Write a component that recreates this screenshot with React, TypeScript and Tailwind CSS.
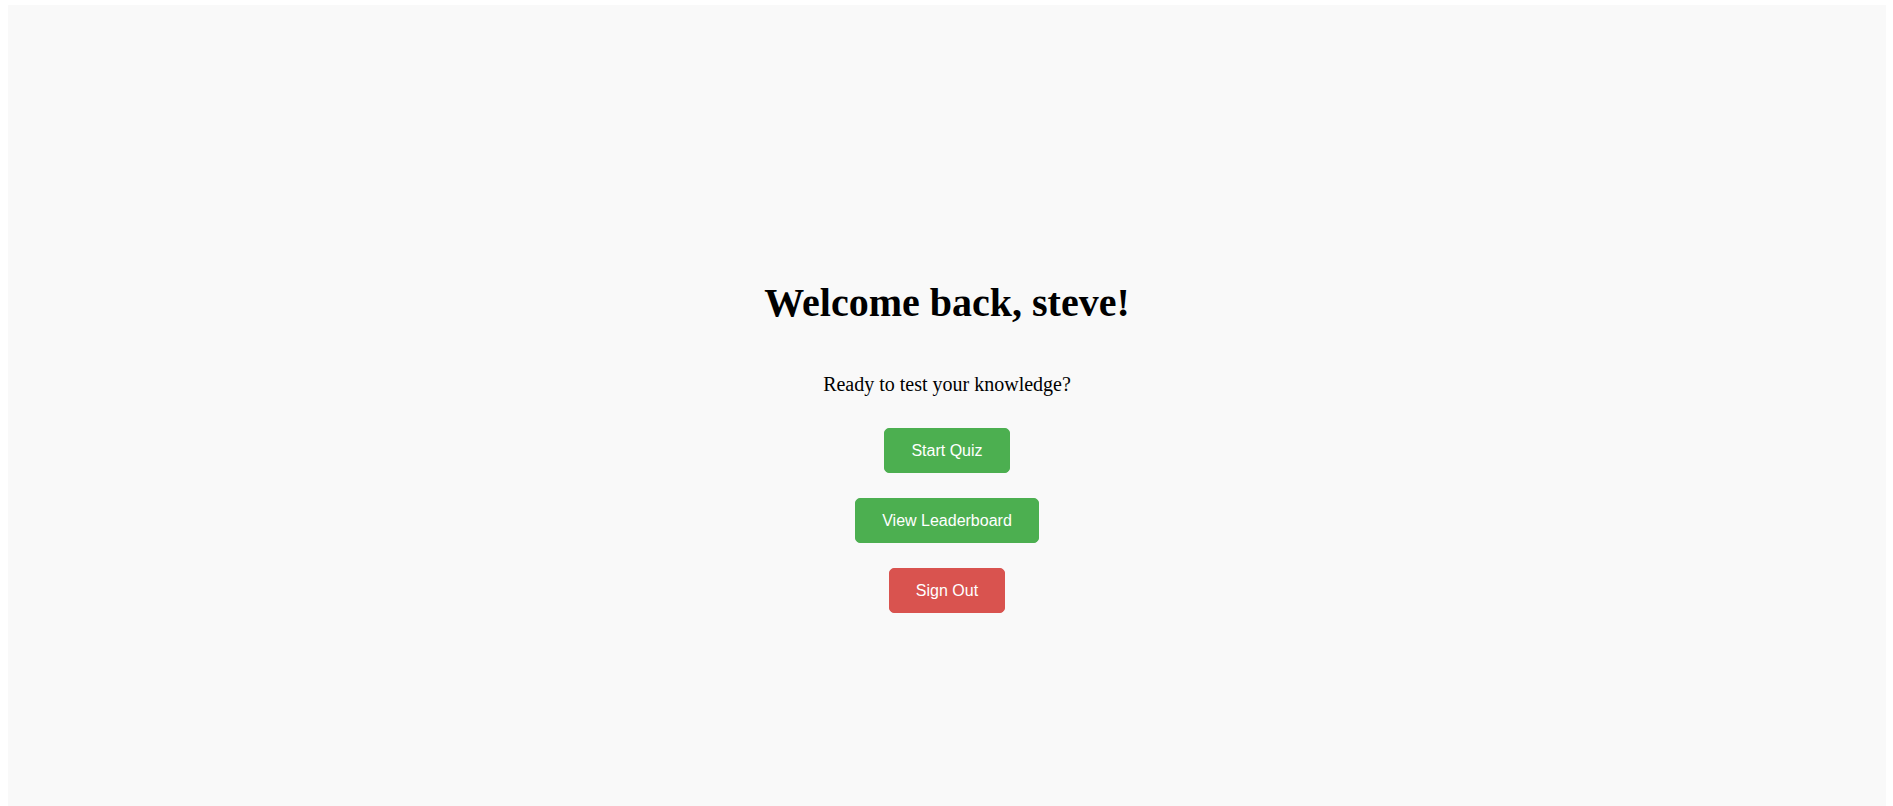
import React from 'react';

function App() {
  const user = 'steve';

  return (
    <div className="h-[806px] bg-white pl-2 pr-[7px] pt-[5px]">
      <div className="h-full bg-[#f9f9f9] flex flex-col items-center pt-[275px] font-['Liberation_Serif',serif] text-black">
        <h1 className="text-[40px] leading-[46px] font-bold mb-[47px]">Welcome back, {user}!</h1>
        <p className="text-[20px] leading-[23px] mb-[32px]">Ready to test your knowledge?</p>

        <div className="flex flex-col items-center gap-[25px] font-['Liberation_Sans',Arial,sans-serif]">
          <button className="bg-[#4caf50] border border-[#4caf50] text-white text-[16px] leading-[19px] py-3 px-[26px] rounded-[5px]">
            Start Quiz
          </button>
          <button className="bg-[#4caf50] border border-[#4caf50] text-white text-[16px] leading-[19px] py-3 px-[26px] rounded-[5px]">
            View Leaderboard
          </button>
          <button className="bg-[#d9534f] border border-[#d9534f] text-white text-[16px] leading-[19px] py-3 px-[26px] rounded-[5px]">
            Sign Out
          </button>
        </div>
      </div>
    </div>
  );
}

export default App;
